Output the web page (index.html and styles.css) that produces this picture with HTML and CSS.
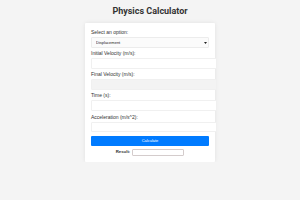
FILE: index.html
```html
<!DOCTYPE html>
<html lang="en">
<head>
  <meta charset="UTF-8">
  <meta name="viewport" content="width=device-width, initial-scale=1.0">
  <title>Physics Calculator</title>
  <link rel="stylesheet" href="styles.css">
</head>
<body>
  <h1>Physics Calculator</h1>
  <div class="calc-container">
    <label for="option">Select an option:</label>
    <div class="select-wrap">
      <select id="option">
        <option>Displacement</option>
        <option>Final Velocity</option>
        <option>Acceleration</option>
      </select>
      <svg class="select-arrow" width="3" height="2" viewBox="0 0 3 2"><path d="M0 0h3L1.5 2z" fill="#222"/></svg>
    </div>
    <label for="initial">Initial Velocity (m/s):</label>
    <input type="text" id="initial">
    <label for="final">Final Velocity (m/s):</label>
    <input type="text" id="final" disabled>
    <label for="time">Time (s):</label>
    <input type="text" id="time">
    <label for="accel">Acceleration (m/s^2):</label>
    <input type="text" id="accel">
    <button id="calc-btn">Calculate</button>
    <div class="result">
      <span>Result:</span>
      <input type="text" id="result" readonly>
    </div>
  </div>
</body>
</html>
```

FILE: styles.css
```css
* {
  margin: 0;
  padding: 0;
  box-sizing: border-box;
}

body {
  font-family: 'Liberation Sans', Arial, sans-serif;
  font-size: 5px;
  line-height: 6px;
  background-color: #f4f4f4;
  color: #333;
}

h1 {
  font-family: Roboto, 'Liberation Sans', sans-serif;
  font-size: 9px;
  line-height: 10px;
  padding-top: 6px;
  text-align: center;
  color: #333;
}

/* Calculator Card */
.calc-container {
  width: 130px;
  margin: 7px auto 0;
  padding: 6px 6px 6px;
  background-color: #fff;
  box-shadow: 0 0 4px rgba(0, 0, 0, 0.08);
  border-radius: 1px;
}

.calc-container label {
  display: block;
  font-size: 5px;
  line-height: 6px;
  height: 6px;
  margin-bottom: 2px;
}

.select-wrap {
  position: relative;
  height: 10.5px;
  margin-bottom: 2.5px;
}

select {
  display: block;
  appearance: none;
  width: 100%;
  height: 10.5px;
  font-family: inherit;
  font-size: 4px;
  line-height: 5px;
  padding: 0 4px;
  border: 1px solid #ececec;
  border-radius: 1px;
  background-color: #fbfbfb;
  color: #222;
}

.select-arrow {
  position: absolute;
  right: 2.5px;
  top: 4.5px;
}

.calc-container input {
  display: block;
  box-sizing: content-box;
  width: 100%;
  height: 8.5px;
  padding: 0 3px;
  font-size: 4px;
  border: 1px solid #f0f0f0;
  border-radius: 1px;
  background-color: #fff;
  margin-bottom: 2.7px;
}

.calc-container input:disabled {
  background-color: #f3f3f3;
}

button {
  display: block;
  width: 100%;
  height: 10px;
  margin-top: 3.5px;
  background-color: #007bff;
  color: #fff;
  border: none;
  border-radius: 1px;
  font-family: inherit;
  font-size: 4px;
}

.result {
  display: flex;
  justify-content: center;
  align-items: center;
  gap: 2px;
  height: 7px;
  margin-top: 3px;
  font-size: 4.3px;
  font-weight: bold;
}

.result input#result {
  box-sizing: border-box;
  width: 52px;
  height: 7px;
  padding: 0;
  margin: 0;
  border: 1px solid #d4cccc;
}
```
